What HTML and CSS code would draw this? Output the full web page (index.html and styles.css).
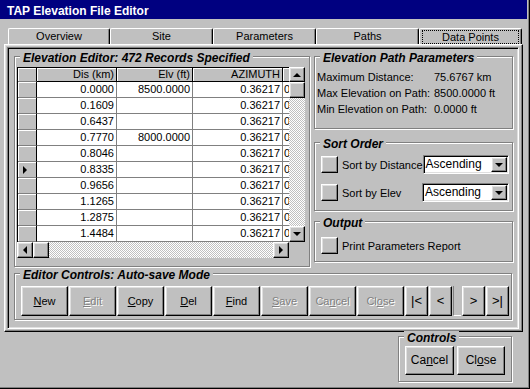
FILE: index.html
```html
<!DOCTYPE html>
<html lang="en">
  <head>
    <meta charset="UTF-8" />
    <title>TAP Elevation File Editor</title>
    <link rel="stylesheet" href="styles.css">
  </head>
  <body>
    <div class="window">
      <div class="titlebar">TAP Elevation File Editor</div>

      <div class="tabs">
        <div class="tab">Overview</div>
        <div class="tab">Site</div>
        <div class="tab">Parameters</div>
        <div class="tab">Paths</div>
        <div class="tab active"><span class="focus">Data Points</span></div>
      </div>

      <div class="panel">
        <div class="frame">
          <div class="top-area">
            <div class="group editor">
              <span class="caption">Elevation Editor: 472 Records Specified</span>
              <div class="datagrid">
                <div class="sheet">
                  <div class="cell rowhead"></div>
                  <div class="cell head">Dis (km)</div>
                  <div class="cell head">Elv (ft)</div>
                  <div class="cell head">AZIMUTH</div>
                  <div class="cell head cut"></div>

                  <div class="cell rowhead"></div>
                  <div class="cell">0.0000</div>
                  <div class="cell">8500.0000</div>
                  <div class="cell">0.36217</div>
                  <div class="cell cut">0</div>

                  <div class="cell rowhead"></div>
                  <div class="cell">0.1609</div>
                  <div class="cell"></div>
                  <div class="cell">0.36217</div>
                  <div class="cell cut">0</div>

                  <div class="cell rowhead"></div>
                  <div class="cell">0.6437</div>
                  <div class="cell"></div>
                  <div class="cell">0.36217</div>
                  <div class="cell cut">0</div>

                  <div class="cell rowhead"></div>
                  <div class="cell">0.7770</div>
                  <div class="cell">8000.0000</div>
                  <div class="cell">0.36217</div>
                  <div class="cell cut">0</div>

                  <div class="cell rowhead"></div>
                  <div class="cell">0.8046</div>
                  <div class="cell"></div>
                  <div class="cell">0.36217</div>
                  <div class="cell cut">0</div>

                  <div class="cell rowhead"><span class="tri-right"></span></div>
                  <div class="cell">0.8335</div>
                  <div class="cell"></div>
                  <div class="cell">0.36217</div>
                  <div class="cell cut">0</div>

                  <div class="cell rowhead"></div>
                  <div class="cell">0.9656</div>
                  <div class="cell"></div>
                  <div class="cell">0.36217</div>
                  <div class="cell cut">0</div>

                  <div class="cell rowhead"></div>
                  <div class="cell">1.1265</div>
                  <div class="cell"></div>
                  <div class="cell">0.36217</div>
                  <div class="cell cut">0</div>

                  <div class="cell rowhead"></div>
                  <div class="cell">1.2875</div>
                  <div class="cell"></div>
                  <div class="cell">0.36217</div>
                  <div class="cell cut">0</div>

                  <div class="cell rowhead"></div>
                  <div class="cell">1.4484</div>
                  <div class="cell"></div>
                  <div class="cell">0.36217</div>
                  <div class="cell cut">0</div>
                </div>

                <div class="vscroll">
                  <div class="btn sbtn up"><span class="tri-up"></span></div>
                  <div class="btn sbtn"></div>
                  <div class="track"></div>
                  <div class="btn sbtn"><span class="tri-down"></span></div>
                </div>

                <div class="hscroll">
                  <div class="btn sbtn"><span class="tri-left"></span></div>
                  <div class="btn sbtn"></div>
                  <div class="track"></div>
                  <div class="btn sbtn"><span class="tri-right"></span></div>
                </div>
                <div class="sb-corner"></div>
              </div>
            </div>

            <div class="side">
              <div class="group params">
                <span class="caption">Elevation Path Parameters</span>
                <div class="param-list">
                  <span>Maximum Distance:</span><span>75.6767 km</span>
                  <span>Max Elevation on Path:</span><span>8500.0000 ft</span>
                  <span>Min Elevation on Path:</span><span>0.0000 ft</span>
                </div>
              </div>

              <div class="group sort">
                <span class="caption">Sort Order</span>
                <div class="option-row">
                  <div class="btn check"></div>
                  <span class="option-label">Sort by Distance</span>
                  <div class="combo">
                    <span class="combo-text">Ascending</span>
                    <div class="btn combo-btn"><span class="tri-down"></span></div>
                  </div>
                </div>
                <div class="option-row">
                  <div class="btn check"></div>
                  <span class="option-label">Sort by Elev</span>
                  <div class="combo">
                    <span class="combo-text">Ascending</span>
                    <div class="btn combo-btn"><span class="tri-down"></span></div>
                  </div>
                </div>
              </div>

              <div class="group output">
                <span class="caption">Output</span>
                <div class="option-row">
                  <div class="btn check"></div>
                  <span class="option-label">Print Parameters Report</span>
                </div>
              </div>
            </div>
          </div>

          <div class="group editor-controls">
            <span class="caption">Editor Controls: Auto-save Mode</span>
            <div class="btn-row">
              <div class="btn cmd"><u>N</u>ew</div>
              <div class="btn cmd disabled"><u>E</u>dit</div>
              <div class="btn cmd"><u>C</u>opy</div>
              <div class="btn cmd"><u>D</u>el</div>
              <div class="btn cmd"><u>F</u>ind</div>
              <div class="btn cmd disabled"><u>S</u>ave</div>
              <div class="btn cmd disabled">Ca<u>n</u>cel</div>
              <div class="btn cmd disabled">Cl<u>o</u>se</div>
              <div class="btn nav">|&lt;</div>
              <div class="btn nav">&lt;</div>
              <div class="nav-gap"></div>
              <div class="btn nav">&gt;</div>
              <div class="btn nav">&gt;|</div>
            </div>
          </div>
        </div>
      </div>

      <div class="footer">
        <div class="group controls">
          <span class="caption">Controls</span>
          <div class="btn-row">
            <div class="btn dlg">Ca<u>n</u>cel</div>
            <div class="btn dlg">Cl<u>o</u>se</div>
          </div>
        </div>
      </div>
    </div>
  </body>
</html>
```

FILE: styles.css
```css
* {
  box-sizing: border-box;
}

body {
  margin: 0;
  background: #c0c0c0;
  font-family: "Liberation Sans", Arial, sans-serif;
  font-size: 11px;
  color: #000;
}

.window {
  width: 530px;
  height: 389px;
  border-right: 1px solid #000;
  border-bottom: 1px solid #000;
  box-shadow: inset -1px -1px #808080;
  overflow: hidden;
}

.titlebar {
  height: 19px;
  margin-right: 2px;
  padding: 3px 0 0 7px;
  background: #000080;
  color: #fff;
  font-size: 12px;
  font-weight: bold;
  line-height: 17px;
}

/* tab strip */
.tabs {
  display: flex;
  margin: 9px 0 0 8px;
  height: 16px;
}

.tab {
  width: 103px;
  height: 16px;
  border-top: 1px solid #fff;
  border-left: 1px solid #fff;
  border-right: 1px solid #000;
  border-radius: 2px 2px 0 0;
  box-shadow: inset -1px 0 #808080;
  text-align: center;
  line-height: 15px;
}

.tab:first-child {
  width: 102px;
}

.tab.active {
  padding: 1px 2px 0 2px;
  line-height: 12px;
}

.focus {
  display: block;
  border: 1px dotted #000;
}

.panel {
  width: 519px;
  height: 288px;
  margin-left: 4px;
  padding: 2px 3px 2px 2px;
  border: 1px solid;
  border-color: #fff #000 #000 #fff;
  box-shadow: inset -1px -1px #808080, inset 1px 1px #dfdfdf;
}

.frame {
  height: 100%;
  padding: 8px 0 0 6px;
  border: 1px solid;
  border-color: #808080 #fff #fff #808080;
  box-shadow: inset 1px 1px #000, inset -1px -1px #dfdfdf;
}

/* etched group boxes */
.group {
  position: relative;
  border: 1px solid #808080;
  box-shadow: inset 1px 1px #fff, 1px 1px #fff;
}

.caption {
  position: absolute;
  top: -6px;
  left: 5px;
  padding: 0 3px;
  background: #c0c0c0;
  font-size: 12px;
  font-weight: bold;
  font-style: italic;
  line-height: 14px;
  white-space: nowrap;
}

.top-area {
  display: flex;
  gap: 4px;
}

.editor {
  width: 296px;
  height: 211px;
  padding: 10px 0 0 2px;
}

.side {
  display: flex;
  flex-direction: column;
  width: 199px;
}

.params {
  height: 73px;
  padding: 12px 0 0 2px;
}

.param-list {
  display: grid;
  grid-template-columns: 117px auto;
  line-height: 16px;
}

.sort {
  height: 69px;
  margin-top: 13px;
  padding: 12px 3px 0 6px;
  display: flex;
  flex-direction: column;
  gap: 9px;
}

.output {
  height: 41px;
  margin-top: 10px;
  padding: 14px 3px 0 6px;
}

.option-row {
  display: flex;
  align-items: center;
  height: 19px;
}

.option-label {
  flex: 1;
  margin-left: 4px;
  white-space: nowrap;
}

/* raised push button look */
.btn {
  background: #c0c0c0;
  border: 1px solid;
  border-color: #fff #000 #000 #fff;
  box-shadow: inset -1px -1px #808080, inset 1px 1px #dfdfdf;
}

.check {
  width: 17px;
  height: 17px;
}

.combo {
  display: flex;
  width: 87px;
  height: 19px;
  padding: 1px;
  border: 1px solid;
  border-color: #808080 #fff #fff #808080;
  box-shadow: inset 1px 1px #000, inset -1px -1px #dfdfdf;
  background: #fff;
}

.combo-text {
  flex: 1;
  padding-left: 1px;
  font-size: 12px;
  line-height: 15px;
}

.combo-btn {
  width: 16px;
  display: flex;
  align-items: center;
  justify-content: center;
}

/* data grid */
.datagrid {
  display: grid;
  grid-template-columns: 272px 16px;
  grid-template-rows: 175px 16px;
}

.sheet {
  display: grid;
  grid-template-columns: 19px 80px 76px 90px 6px;
  grid-template-rows: 14px repeat(10, 16px);
  border-top: 1px solid #000;
  border-left: 1px solid #000;
  background: #fff;
  overflow: hidden;
}

.cell {
  padding-right: 2px;
  border-right: 1px solid #808080;
  border-bottom: 1px solid #808080;
  text-align: right;
  line-height: 15px;
  white-space: nowrap;
  overflow: hidden;
}

.cell.head {
  background: #c0c0c0;
  border-color: #000;
  box-shadow: inset 1px 1px #fff;
  line-height: 13px;
}

.cell.rowhead {
  display: flex;
  align-items: center;
  padding-left: 5px;
  background: #c0c0c0;
  border-right-color: #000;
  box-shadow: inset 1px 1px #fff;
}

.cell.cut {
  padding: 0 0 0 1px;
  border-right: 0;
  text-align: left;
}

.cell.head.cut {
  border-bottom-color: #000;
}

.vscroll {
  display: grid;
  grid-template-rows: 15px 16px 1fr 16px;
}

.hscroll {
  display: grid;
  grid-template-columns: 16px 16px 1fr 16px;
}

.sbtn {
  display: flex;
  align-items: center;
  justify-content: center;
}

.track {
  background: repeating-conic-gradient(#c0c0c0 0 25%, #fff 0 50%) 0 0 / 2px 2px;
}

.sb-corner {
  background: #c0c0c0;
}

.tri-up,
.tri-down,
.tri-left,
.tri-right {
  display: block;
  width: 0;
  height: 0;
  border: 4px solid transparent;
}

.tri-up {
  border-top: 0;
  border-bottom-color: #000;
}

.tri-down {
  border-bottom: 0;
  border-top-color: #000;
}

.tri-left {
  border-left: 0;
  border-right-color: #000;
}

.tri-right {
  border-right: 0;
  border-left-color: #000;
}

/* editor buttons */
.editor-controls {
  width: 498px;
  height: 47px;
  margin-top: 6px;
  padding: 12px 0 0 6px;
}

.btn-row {
  display: flex;
  gap: 1px;
}

.cmd {
  width: 47px;
  height: 30px;
  text-align: center;
  line-height: 28px;
}

.nav {
  width: 23px;
  height: 30px;
  text-align: center;
  font-size: 13px;
  line-height: 27px;
}

.nav-gap {
  width: 8px;
  height: 30px;
  border-left: 1px solid #808080;
  border-bottom: 1px solid #fff;
}

.disabled {
  color: #808080;
  text-shadow: 1px 1px #fff;
}

.footer {
  padding: 4px 0 0 398px;
}

.controls {
  width: 114px;
  height: 46px;
  padding: 9px 0 0 6px;
}

.controls .btn-row {
  gap: 3px;
}

.dlg {
  width: 49px;
  height: 29px;
  text-align: center;
  font-size: 12px;
  line-height: 27px;
}

.dlg + .dlg {
  width: 48px;
}
```
